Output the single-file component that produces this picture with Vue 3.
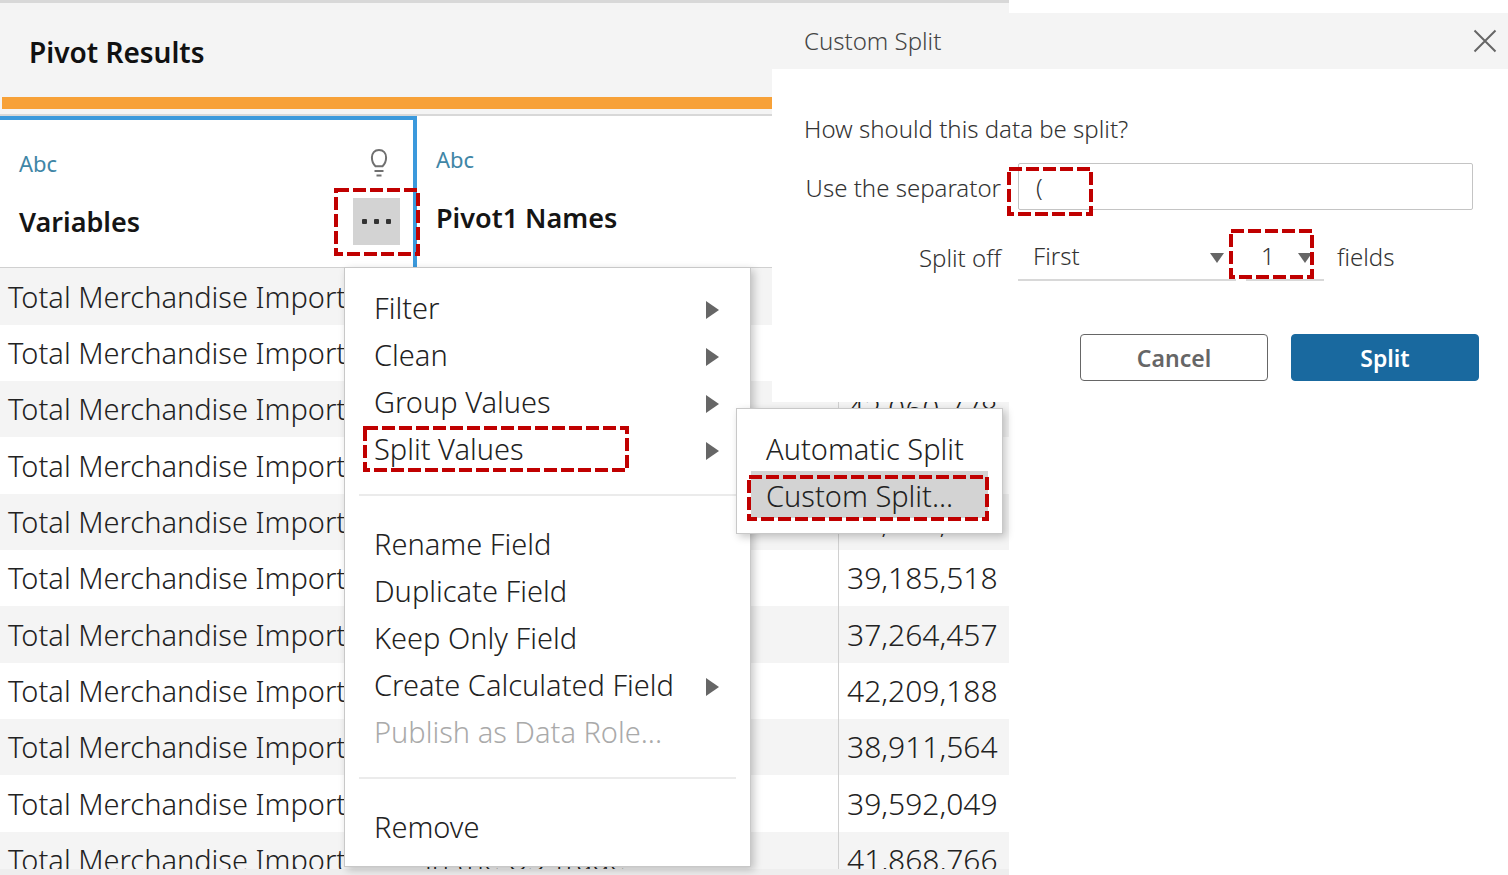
<script setup>
import { ref } from 'vue'

const values = [
  '41,402,915', '40,718,336', '42,060,778', '40,127,604', '38,645,210', '39,185,518',
  '37,264,457', '42,209,188', '38,911,564', '39,592,049', '41,868,766',
]
const rows = values.map((value, i) => ({
  label: 'Total Merchandise Import',
  name: i === values.length - 1 ? 'in the US Trade' : '',
  value,
}))

const menuGroups = [
  [
    { text: 'Filter', sub: true },
    { text: 'Clean', sub: true },
    { text: 'Group Values', sub: true },
    { text: 'Split Values', sub: true, mark: true },
  ],
  [
    { text: 'Rename Field' },
    { text: 'Duplicate Field' },
    { text: 'Keep Only Field' },
    { text: 'Create Calculated Field', sub: true },
    { text: 'Publish as Data Role...', disabled: true },
  ],
  [{ text: 'Remove' }],
]

const separator = ref('(')
const position = ref('First')
const count = ref('1')
</script>

<template>
  <main class="page">
    <section class="pane">
      <header class="pane-head">
        <h1>Pivot Results</h1>
      </header>
      <div class="accent"></div>
      <div class="grid-wrap">
        <table>
          <colgroup>
            <col class="col-var" />
            <col />
            <col class="col-val" />
          </colgroup>
          <thead>
            <tr>
              <th scope="col">
                <div class="field selected">
                  <div class="line">
                    <span class="type">Abc</span>
                    <svg class="bulb" viewBox="0 0 18 30" aria-hidden="true">
                      <path d="M9 2C4.600 2 1.900 5 1.900 9.600c0 3.900 1.500 6.700 3.600 8.700h7c2.100-2 3.600-4.800 3.600-8.700C16.100 5 13.400 2 9 2Z" />
                      <path d="M4.500 23h9M6.500 27.500h5" />
                    </svg>
                  </div>
                  <div class="line name">
                    <span>Variables</span>
                    <button class="more" aria-label="More options"><i></i><i></i><i></i>
                      <svg class="mark mark-more" aria-hidden="true"><rect /></svg>
                    </button>
                  </div>
                </div>
              </th>
              <th scope="col">
                <div class="field">
                  <div class="line"><span class="type">Abc</span></div>
                  <div class="line name"><span>Pivot1 Names</span></div>
                </div>
              </th>
              <th scope="col"></th>
            </tr>
          </thead>
          <tbody>
            <tr v-for="(row, i) in rows" :key="i">
              <td>{{ row.label }}</td>
              <td>{{ row.name }}</td>
              <td class="num">{{ row.value }}</td>
            </tr>
          </tbody>
        </table>
      </div>
      <footer class="scroll"></footer>
    </section>

    <section class="dialog" role="dialog" aria-labelledby="dlg-title">
      <header class="dialog-head">
        <h2 id="dlg-title">Custom Split</h2>
        <button class="close" aria-label="Close">
          <svg viewBox="0 0 24 24"><path d="M1.500 1.500l21 21M22.500 1.500l-21 21" /></svg>
        </button>
      </header>
      <form @submit.prevent>
        <p>How should this data be split?</p>
        <div class="row">
          <label for="sep">Use the separator</label>
          <div class="control grow">
            <input id="sep" v-model="separator" type="text" />
            <svg class="mark mark-sep" aria-hidden="true"><rect /></svg>
          </div>
        </div>
        <div class="row row-split">
          <label for="pos">Split off</label>
          <div class="control wide">
            <select id="pos" v-model="position">
              <option>First</option>
              <option>Last</option>
              <option>All</option>
            </select>
            <svg class="caret" viewBox="0 0 14 10" aria-hidden="true"><path d="M0 0h14L7 10Z" /></svg>
          </div>
          <div class="control narrow">
            <select id="cnt" v-model="count">
              <option>1</option>
              <option>2</option>
              <option>3</option>
            </select>
            <svg class="caret" viewBox="0 0 14 10" aria-hidden="true"><path d="M0 0h14L7 10Z" /></svg>
            <svg class="mark mark-cnt" aria-hidden="true"><rect /></svg>
          </div>
          <label class="after" for="cnt">fields</label>
        </div>
        <div class="actions">
          <button type="button" class="btn">Cancel</button>
          <button type="submit" class="btn primary">Split</button>
        </div>
      </form>
    </section>

    <nav class="menu main-menu" aria-label="Field options">
      <ul v-for="(group, g) in menuGroups" :key="g">
        <li v-for="item in group" :key="item.text">
          <button class="item" :disabled="item.disabled">
            <span>{{ item.text }}</span>
            <svg v-if="item.sub" class="arrow" viewBox="0 0 13 18" aria-hidden="true"><path d="M0 0L13 9L0 18Z" /></svg>
            <svg v-if="item.mark" class="mark mark-split" aria-hidden="true"><rect /></svg>
          </button>
        </li>
      </ul>
    </nav>

    <nav class="menu sub-menu" aria-label="Split options">
      <ul>
        <li><button class="item">Automatic Split</button></li>
        <li>
          <button class="item active">Custom Split...
            <svg class="mark mark-custom" aria-hidden="true"><rect /></svg>
          </button>
        </li>
      </ul>
    </nav>
  </main>
</template>

<style>
body {
  background: #fff;
}
</style>

<style scoped>
* {
  box-sizing: border-box;
}
.page {
  position: relative;
  height: 100vh;
  overflow: hidden;
  font-family: "Noto Sans", "Open Sans", sans-serif;
  font-weight: 350;
  color: #222;
}
button,
input,
select {
  font: inherit;
  color: inherit;
  margin: 0;
  padding: 0;
  border: 0;
  background: none;
}
h1,
h2,
p,
ul {
  margin: 0;
  padding: 0;
  list-style: none;
}

/* Data pane */
.pane {
  display: flex;
  flex-direction: column;
  height: 100%;
  margin-right: 499px;
  background: #f4f4f4;
}
.pane-head {
  padding: 32px 29px 28px;
  border-top: 3px solid #d8d8d8;
}
h1 {
  font-size: 28px;
  line-height: 34px;
  font-weight: 600;
  color: #111;
}
.accent {
  height: 12px;
  margin: 0 0 5px 2px;
  background: #f7a138;
}
.grid-wrap {
  flex: 1;
  min-height: 0;
  overflow: hidden;
  border-top: 2px solid #d8d8d8;
}
table {
  width: 100%;
  table-layout: fixed;
  border-collapse: separate;
  border-spacing: 0;
  background: #fff;
}
.col-var {
  width: 417px;
}
.col-val {
  width: 171px;
}
th {
  padding: 0;
  text-align: left;
  vertical-align: top;
  border-bottom: 1px solid #d0d0d0;
}
.field {
  padding: 27px 13px 22px 19px;
}
.field.selected {
  border: solid #3b99dc;
  border-width: 4px 4px 0 0;
}
.line {
  display: flex;
  align-items: center;
  justify-content: space-between;
  height: 32px;
}
.line.name {
  height: 47px;
  margin-top: 19px;
  font-size: 27px;
  font-weight: 600;
  color: #151515;
}
.type {
  font-size: 22px;
  font-weight: 400;
  color: #3f86a6;
}
.bulb {
  width: 18px;
  height: 30px;
  margin-right: 12px;
  fill: none;
  stroke: #707070;
  stroke-width: 2;
}
.more {
  position: relative;
  display: flex;
  align-items: center;
  justify-content: center;
  gap: 7px;
  width: 47px;
  height: 47px;
  background: #d3d3d3;
}
.more i {
  width: 5px;
  height: 5px;
  border-radius: 1px;
  background: #333;
}
tbody tr {
  height: 56px;
}
tbody tr:nth-child(3n + 1) {
  height: 57px;
}
tbody tr:nth-child(odd) {
  background: #f4f4f4;
}
td {
  padding: 0 0 0 8px;
  white-space: nowrap;
  font-size: 29px;
  line-height: 40px;
}
.num {
  border-left: 1px solid #d0d0d0;
  font-size: 30px;
}
.scroll {
  height: 6px;
  background: #eee;
}

/* Dialog */
.dialog {
  position: absolute;
  top: 13px;
  left: 772px;
  right: 0;
  background: #fff;
  color: #444;
  font-size: 24px;
  line-height: 32px;
}
.dialog-head {
  display: flex;
  align-items: center;
  justify-content: space-between;
  height: 56px;
  padding: 0 11px 0 32px;
  background: #f4f4f4;
}
h2 {
  font: inherit;
}
.close,
.close svg {
  display: block;
  width: 24px;
  height: 24px;
}
.close svg {
  fill: none;
  stroke: #666;
  stroke-width: 2;
}
form {
  padding: 44px 29px 21px 32px;
  color: #333;
}
.row {
  display: flex;
  align-items: center;
  margin-top: 18px;
  margin-right: 6px;
}
.row label:first-child {
  width: 197px;
  margin-right: 17px;
  padding-top: 2px;
  text-align: right;
  white-space: nowrap;
}
.control {
  position: relative;
}
.grow {
  flex: 1;
}
input {
  display: block;
  width: 100%;
  height: 47px;
  padding: 0 17px;
  border: 1px solid #c4c4c4;
  border-radius: 2px;
}
.row-split {
  margin-top: 23px;
}
select {
  display: block;
  width: 100%;
  height: 48px;
  padding-left: 15px;
  appearance: none;
  border-bottom: 2px solid #d8d8d8;
}
.wide {
  width: 218px;
  margin-right: 10px;
}
.narrow {
  width: 78px;
}
.caret {
  position: absolute;
  top: 20px;
  right: 12px;
  width: 14px;
  height: 10px;
  fill: #666;
}
.after {
  margin-left: 13px;
}
.actions {
  display: flex;
  justify-content: flex-end;
  gap: 23px;
  margin-top: 53px;
}
.btn {
  width: 188px;
  height: 47px;
  border: 1px solid #666;
  border-radius: 4px;
  font-size: 23px;
  font-weight: 600;
  color: #666;
}
.primary {
  border-color: #19699f;
  background: #19699f;
  color: #fff;
}

/* Menus */
.menu {
  position: absolute;
  padding: 15px 14px 17px;
  border: 1px solid #c8c8c8;
  background: #fff;
  box-shadow: 3px 3px 8px rgba(0, 0, 0, 0.22);
  font-size: 29px;
  line-height: 44px;
}
.main-menu {
  top: 267px;
  left: 344px;
  width: 407px;
}
.sub-menu {
  top: 408px;
  left: 736px;
  width: 267px;
  padding-bottom: 15px;
}
.menu ul + ul {
  margin-top: 23px;
  padding-top: 23px;
  border-top: 2px solid #ebebeb;
}
.item {
  position: relative;
  display: flex;
  align-items: center;
  justify-content: space-between;
  width: 100%;
  height: 47px;
  padding: 3px 17px 0 15px;
  text-align: left;
  white-space: nowrap;
}
.item:disabled {
  color: #aaa;
}
.active {
  background: #d3d3d3;
}
.arrow {
  width: 13px;
  height: 18px;
  margin-top: 3px;
  fill: #666;
}

/* Dashed callouts */
.mark {
  position: absolute;
  overflow: visible;
  pointer-events: none;
}
.mark rect {
  x: 2px;
  y: 2px;
  width: calc(100% - 4px);
  height: calc(100% - 4px);
  fill: none;
  stroke: #c00000;
  stroke-width: 4;
  stroke-dasharray: 13 4;
}
.mark-more {
  top: -10px;
  left: -19px;
  width: 86px;
  height: 68px;
}
.mark-sep {
  top: 4px;
  left: -11px;
  width: 86px;
  height: 49px;
}
.mark-cnt {
  top: -4px;
  left: -17px;
  width: 85px;
  height: 50px;
}
.mark-split {
  top: 2px;
  left: 4px;
  width: 266px;
  height: 46px;
}
.mark-custom {
  top: 4px;
  left: -4px;
  width: 242px;
  height: 46px;
}
</style>
